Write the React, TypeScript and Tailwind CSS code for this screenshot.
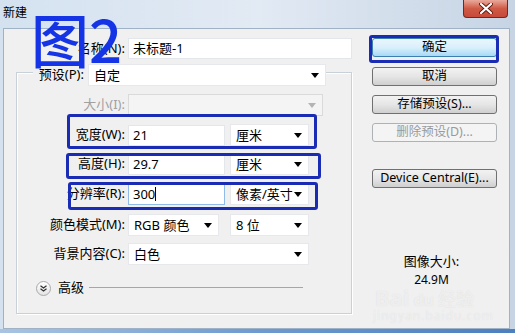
import React from 'react'

const Arrow: React.FC<{ disabled?: boolean }> = ({ disabled }) => (
  <svg width="8" height="5" viewBox="0 0 8 5" className="shrink-0">
    <path d="M0 0 H8 L4 5 Z" fill={disabled ? '#b4b4b4' : '#000'} />
  </svg>
)

const Select: React.FC<{ value?: string; w: string; disabled?: boolean }> = ({ value, w, disabled }) => (
  <div
    className={`${w} h-[22px] flex items-center justify-between pl-[5px] pr-[6px] border ${
      disabled ? 'bg-[#f4f4f4] border-[#dadada]' : 'bg-white border-[#e6e8eb]'
    }`}
  >
    <span className="leading-none">{value}</span>
    <Arrow disabled={disabled} />
  </div>
)

const Input: React.FC<{ value: string; w: string; focus?: boolean }> = ({ value, w, focus }) => (
  <div
    className={`${w} h-[21px] flex items-center pl-[4px] bg-white border ${
      focus ? 'border-[#8fbbe6]' : 'border-[#e3e6ea]'
    }`}
  >
    <span className="leading-none">{value}</span>
    {focus && <span className="w-px h-[14px] bg-black" />}
  </div>
)

const Label: React.FC<{ text: string; disabled?: boolean }> = ({ text, disabled }) => (
  <div className={`w-[111px] text-right pr-[3px] ${disabled ? 'text-[#a0a0a0]' : ''}`}>{text}</div>
)

const Mark: React.FC<{ cls: string }> = ({ cls }) => (
  <span className={`absolute ${cls} border-[3px] border-[#1b2cb4] rounded-[3px] z-10 pointer-events-none`} />
)

const Btn: React.FC<{ text: string; cls?: string; disabled?: boolean; primary?: boolean }> = ({
  text,
  cls = '',
  disabled,
  primary,
}) => (
  <div
    className={`relative w-[125px] h-[19px] flex items-center justify-center rounded-[3px] border text-[12.5px] ${cls} ${
      primary
        ? 'border-[#3c7fb1] bg-gradient-to-b from-[#eaf6fd] via-[#d9f0fc] to-[#a7d9f5]'
        : disabled
          ? 'border-[#adb2b5] bg-[#f4f4f4] text-[#9a9a9a]'
          : 'border-[#707070] bg-gradient-to-b from-[#f2f2f2] via-[#e6e6e6] to-[#cfcfcf]'
    }`}
  >
    {text}
  </div>
)

export default function App() {
  return (
    <div className="relative w-[515px] h-[333px] overflow-hidden flex flex-col bg-gradient-to-r from-[#d4e2f0] via-[#e2eaf4] to-[#c6d4e4] text-[13px] text-black font-['Noto_Sans','Noto_Sans_CJK_SC',sans-serif]">
      {/* title bar */}
      <div className="h-[28px] shrink-0 flex items-start justify-between">
        <span className="pl-[3px] pt-[4px] text-[12px]">新建</span>
        <div className="mr-[7px] w-[45px] h-[18px] rounded-b-[4px] border border-t-0 border-[#6b2a22] bg-gradient-to-b from-[#e9a99c] via-[#cf5a45] to-[#c7493a] flex items-center justify-center">
          <svg width="14" height="11" viewBox="0 0 14 11">
            <path d="M2 1 L12 10 M12 1 L2 10" stroke="#5a1a12" strokeWidth="4" strokeLinecap="round" />
            <path d="M2 1 L12 10 M12 1 L2 10" stroke="#fff" strokeWidth="2.2" strokeLinecap="round" />
          </svg>
        </div>
      </div>

      {/* client area */}
      <div className="ml-[3px] mr-[5px] h-[301px] shrink-0 flex bg-[#f0f0f0] border border-[#9fb2c6]">
        {/* left column */}
        <div className="w-[349px] shrink-0 pl-[12px] pt-[9px]">
          <div className="flex items-center h-[21px]">
            <div className="w-[112px] text-right pr-[3px]">名称(N):</div>
            <Input value="未标题-1" w="w-[224px]" />
          </div>

          <div className="mt-[13px] w-[336px] h-[242px] border border-[#c9d1d8] shadow-[inset_1px_1px_0_#fff,1px_1px_0_#fff]">
            <div className="-mt-[9px] flex items-center">
              <div className="ml-[16px] w-[55px] text-right pr-[4px] bg-[#f0f0f0]">预设(P):</div>
              <Select value="自定" w="w-[238px]" />
            </div>

            <div className="mt-[8px] flex items-center">
              <Label text="大小(I):" disabled />
              <Select w="w-[195px]" disabled />
            </div>

            <div className="relative mt-[8px] flex items-center">
              <Mark cls="left-[50px] -top-[10px] w-[250px] h-[35px]" />
              <Label text="宽度(W):" />
              <Input value="21" w="w-[97px]" />
              <div className="ml-[5px]">
                <Select value="厘米" w="w-[79px]" />
              </div>
            </div>

            <div className="relative mt-[7px] flex items-center">
              <Mark cls="left-[49px] top-0 w-[255px] h-[26px]" />
              <Label text="高度(H):" />
              <Input value="29.7" w="w-[97px]" />
              <div className="ml-[5px]">
                <Select value="厘米" w="w-[79px]" />
              </div>
            </div>

            <div className="relative mt-[8px] flex items-center">
              <Mark cls="left-[51px] -top-[1px] w-[250px] h-[28px]" />
              <Label text="分辨率(R):" />
              <Input value="300" w="w-[97px]" focus />
              <div className="ml-[5px]">
                <Select value="像素/英寸" w="w-[79px]" />
              </div>
            </div>

            <div className="mt-[9px] flex items-center">
              <Label text="颜色模式(M):" />
              <Select value="RGB 颜色" w="w-[91px]" />
              <div className="ml-[11px]">
                <Select value="8 位" w="w-[79px]" />
              </div>
            </div>

            <div className="mt-[7px] flex items-center">
              <Label text="背景内容(C):" />
              <Select value="白色" w="w-[181px]" />
            </div>

            <div className="mt-[15px] h-[16px] flex items-center">
              <div className="ml-[19px] w-[15px] h-[15px] rounded-full border border-[#a9a9a9] bg-gradient-to-b from-white to-[#e4e4e4] flex items-center justify-center">
                <svg width="7" height="7" viewBox="0 0 7 7">
                  <path d="M0.5 0.8 L3.5 3 L6.5 0.8 M0.5 3.8 L3.5 6 L6.5 3.8" stroke="#333" strokeWidth="1.3" fill="none" />
                </svg>
              </div>
              <span className="ml-[7px]">高级</span>
              <div className="ml-[5px] mr-[48px] flex-1 h-[2px] border-t border-[#a6a6a6] border-b-white" />
            </div>
          </div>
        </div>

        {/* right column */}
        <div className="relative flex-1 pl-[19px] pt-[9px] flex flex-col">
          <div className="relative">
            <Mark cls="-left-[3px] -top-[3px] w-[130px] h-[28px]" />
            <Btn text="确定" primary />
          </div>
          <Btn text="取消" cls="mt-[10px]" />
          <Btn text="存储预设(S)..." cls="mt-[9px]" />
          <Btn text="删除预设(D)..." cls="mt-[9px]" disabled />
          <Btn text="Device Central(E)..." cls="mt-[27px]" />

          <div className="mt-[65px] w-[119px] text-center leading-[16px]">图像大小:</div>
          <div className="mt-[4px] w-[119px] text-center text-[12px] leading-[14px]">24.9M</div>

          {/* watermark */}
          <div className="absolute left-[22px] top-[257px] flex items-baseline gap-[4px] text-white/60 [text-shadow:0_0_1px_#d4d4d4]">
            <span className="text-[22px] font-bold leading-none">Bai</span>
            <span className="text-[16px] font-bold leading-none">du</span>
            <span className="text-[18px] leading-none">经验</span>
          </div>
          <div className="absolute left-[20px] top-[278px] text-[12px] tracking-[1px] text-white/50 [text-shadow:0_0_1px_#d8d8d8]">
            jingyan.baidu.com
          </div>
        </div>
      </div>

      <div className="flex-1 bg-gradient-to-r from-[#a9c4e2] via-[#6d9ad0] to-[#4d7fbf]" />

      {/* annotation */}
      <div className="absolute left-[31px] top-[6px] text-[58px] leading-[64px] font-medium text-[#1434e6] font-['Noto_Sans_CJK_SC',sans-serif] pointer-events-none z-20">
        图2
      </div>
    </div>
  )
}
